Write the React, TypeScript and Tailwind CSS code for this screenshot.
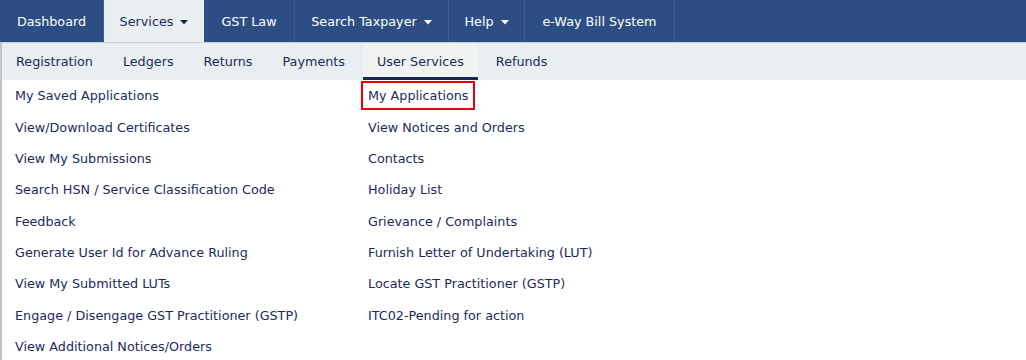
import clsx from 'clsx'

const font = { fontFamily: '"DejaVu Sans", Verdana, sans-serif' }

interface TopItem {
  label: string
  width: string
  caret?: boolean
  active?: boolean
}

const topItems: TopItem[] = [
  { label: 'Dashboard', width: 'w-[104px]' },
  { label: 'Services', width: 'w-[100px]', caret: true, active: true },
  { label: 'GST Law', width: 'w-[91px]' },
  { label: 'Search Taxpayer', width: 'w-[154px]', caret: true },
  { label: 'Help', width: 'w-[76px]', caret: true },
  { label: 'e-Way Bill System', width: 'w-[150px]' },
]

const subTabs = ['Registration', 'Ledgers', 'Returns', 'Payments', 'User Services', 'Refunds']

const leftLinks = [
  'My Saved Applications',
  'View/Download Certificates',
  'View My Submissions',
  'Search HSN / Service Classification Code',
  'Feedback',
  'Generate User Id for Advance Ruling',
  'View My Submitted LUTs',
  'Engage / Disengage GST Practitioner (GSTP)',
  'View Additional Notices/Orders',
]

const rightLinks = [
  'My Applications',
  'View Notices and Orders',
  'Contacts',
  'Holiday List',
  'Grievance / Complaints',
  'Furnish Letter of Undertaking (LUT)',
  'Locate GST Practitioner (GSTP)',
  'ITC02-Pending for action',
]

function Caret({ light }: { light?: boolean }) {
  return (
    <svg width="8" height="5" viewBox="0 0 8 5" className="ml-[7px] mt-[1px]">
      <path d="M0 0h8L4 4.5z" fill={light ? '#ffffff' : '#1b2a5c'} />
    </svg>
  )
}

export default function App() {
  return (
    <div className="w-[1026px] h-[360px] bg-white overflow-hidden text-[12.75px]" style={font}>
      {/* Top navigation */}
      <nav className="flex h-[42px] bg-[#2c4e85] text-[12.75px]">
        {topItems.map((item) => (
          <div
            key={item.label}
            className={clsx(
              'flex items-center justify-center h-full pt-[1px]',
              item.width,
              item.active ? 'bg-[#e9eef1] text-[#1b2a5c]' : 'text-white border-r border-[#3d5d90]'
            )}
          >
            <span>{item.label}</span>
            {item.caret && <Caret light={!item.active} />}
          </div>
        ))}
      </nav>

      {/* Services dropdown */}
      <div className="border-t border-[#c9d0d3] border-l-2 border-l-[#c4c4c4] text-[#1b2a5c]">
        <div className="flex h-[37px] bg-[#e9eef1]">
          {subTabs.map((tab) => (
            <div
              key={tab}
              className={clsx(
                'flex items-center h-full',
                tab === 'Registration' && 'pl-[14px] pr-[15px]',
                tab === 'User Services'
                  ? 'ml-[3px] px-[14px] bg-[#f1f3f2] border-b-[3px] border-[#15285a] pt-[3px]'
                  : tab === 'Refunds'
                    ? 'pl-[18px] pr-[15px]'
                    : tab !== 'Registration' && 'px-[15px]'
              )}
            >
              {tab}
            </div>
          ))}
        </div>

        <div className="grid grid-cols-[353px_1fr] pl-[13px]">
          <ul>
            {leftLinks.map((l) => (
              <li key={l} className="h-[31.375px] flex items-center">{l}</li>
            ))}
          </ul>
          <ul>
            {rightLinks.map((l, i) => (
              <li key={l} className="h-[31.375px] flex items-center">
                <span
                  className={clsx(
                    i === 0 && 'border-2 border-[#e8000b] px-[5px] py-[3px] -ml-[7px]'
                  )}
                >
                  {l}
                </span>
              </li>
            ))}
          </ul>
        </div>
      </div>
    </div>
  )
}
